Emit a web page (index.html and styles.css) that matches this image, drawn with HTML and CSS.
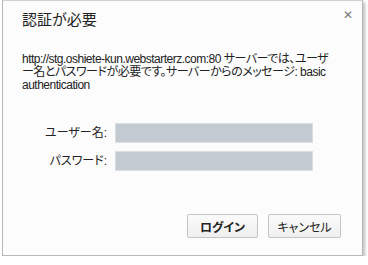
FILE: index.html
```html
<!DOCTYPE html>
<html lang="ja">

<head>
    <meta charset="UTF-8">
    <title>認証が必要</title>
    <link rel="stylesheet" href="styles.css">
</head>

<body>

    <div class="dialog">
        <div class="close">&#x2715;</div>
        <h1 class="title">認証が必要</h1>
        <p class="message">http://stg.oshiete-kun.webstarterz.com:80 サーバーでは、ユーザー名とパスワードが必要です。サーバーからのメッセージ: basic authentication</p>

        <form class="login">
            <label for="user">ユーザー名:</label>
            <input type="text" id="user">
            <label for="pass">パスワード:</label>
            <input type="password" id="pass">
        </form>

        <div class="buttons">
            <button class="btn btn-login">ログイン</button>
            <button class="btn">キャンセル</button>
        </div>
    </div>

</body>

</html>
```

FILE: styles.css
```css
* {
    margin: 0;
    box-sizing: border-box;
}

body {
    background-color: #ffffff;
    font-family: "Liberation Sans", "Noto Sans CJK JP", sans-serif;
    font-feature-settings: "palt";
    color: #222;
}

.dialog {
    position: relative;
    margin-left: 2px;
    width: 361px;
    height: 256px;
    background-color: #fcfcfc;
    border: 1px solid #b8b8b8;
    border-top-color: #d0d0d0;
    box-shadow: 2px 2px 3px rgba(0, 0, 0, 0.25);
    padding: 9px 21px 0 19px;
}

.close {
    position: absolute;
    top: 7px;
    right: 9px;
    font-size: 12px;
    font-weight: bold;
    color: #7a7a7a;
    font-family: "DejaVu Sans", sans-serif;
}

.title {
    font-size: 15px;
    font-weight: normal;
    line-height: 20px;
    color: #222;
}

.message {
    margin-top: 23px;
    width: 316px;
    font-size: 12px;
    line-height: 13px;
    letter-spacing: -0.5px;
    line-break: loose;
}

.login {
    display: grid;
    grid-template-columns: 85px 198px;
    column-gap: 8px;
    row-gap: 8px;
    margin-top: 31px;
    font-size: 12px;
}

.login label {
    text-align: right;
    line-height: 20px;
}

.login input {
    height: 20px;
    border: 1px solid #dcdfe2;
    background-color: #c3cad1;
    padding: 0 4px;
}

.buttons {
    display: flex;
    justify-content: flex-end;
    gap: 10px;
    margin-top: 43px;
}

.btn {
    height: 24px;
    width: 73px;
    padding: 0;
    white-space: nowrap;
    font-family: "Liberation Sans", "Noto Sans CJK JP", sans-serif;
    font-feature-settings: "palt";
    font-size: 12px;
    color: #222;
    border: 1px solid #c4c4c4;
    border-radius: 2px;
    background: linear-gradient(#fafafa, #efefef);
}

.btn-login {
    width: 71px;
    font-weight: bold;
}
```
